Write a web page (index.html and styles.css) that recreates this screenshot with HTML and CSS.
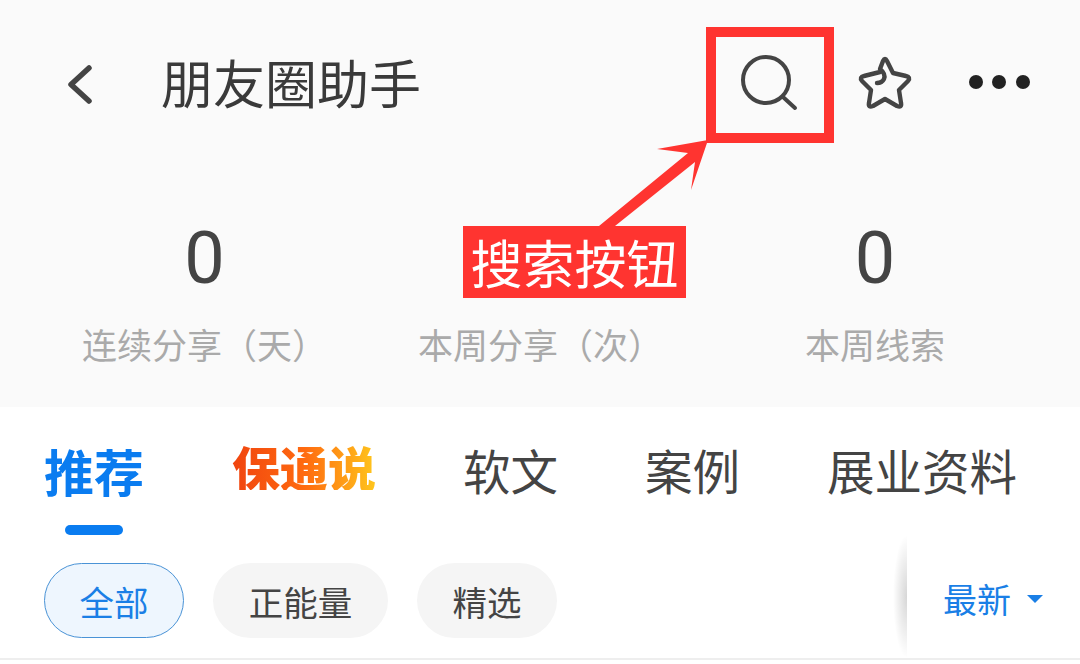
FILE: index.html
```html
<!DOCTYPE html>
<html lang="zh-CN">
<head>
  <meta charset="UTF-8">
  <title>朋友圈助手</title>
  <link rel="stylesheet" href="styles.css">
</head>
<body>

  <div class="page">
    <div class="top">
      <div class="header">
        <svg class="icon-back" viewBox="0 0 30 44" fill="none" stroke="#444" stroke-width="5.5" stroke-linecap="round" stroke-linejoin="round">
          <path d="M27 8 L9 24.5 L27 41"/>
        </svg>
        <h1>朋友圈助手</h1>
        <svg class="icon-search" viewBox="0 0 60 60" fill="none" stroke="#444" stroke-width="4" stroke-linecap="round">
          <circle cx="26" cy="28" r="23"/>
          <path d="M43 45 L55 56"/>
        </svg>
        <svg class="icon-star" viewBox="0 0 60 60" fill="none" stroke="#444" stroke-width="4.4" stroke-linecap="round" stroke-linejoin="round">
          <path d="M25 20 L9 24 Q4 25 7 29 L16 38 L14 51 Q13 56 18 54 L30 47 L42 54 Q47 56 46 51 L44 38 L53 29 Q56 25 51 24 L38 21 L32 9 Q30 5 28 9 L25 17 Q31 22 29 27 Q27 31 22 31"/>
        </svg>
        <svg class="icon-more" viewBox="0 0 64 20" fill="#222">
          <circle cx="8" cy="10" r="7"/>
          <circle cx="31" cy="10" r="7"/>
          <circle cx="55" cy="10" r="7"/>
        </svg>
      </div>

      <div class="stats">
        <div class="stat stat-days">
          <div class="num">0</div>
          <div class="label">连续分享（天）</div>
        </div>
        <div class="stat stat-times">
          <!-- number sits under the red label in the screenshot -->
          <div class="num"></div>
          <div class="label">本周分享（次）</div>
        </div>
        <div class="stat stat-leads">
          <div class="num">0</div>
          <div class="label">本周线索</div>
        </div>
      </div>
    </div>

    <div class="tabs">
      <div class="tab tab-active">推荐</div>
      <div class="tab tab-brand">保通说</div>
      <div class="tab tab-soft">软文</div>
      <div class="tab tab-case">案例</div>
      <div class="tab tab-docs">展业资料</div>
    </div>

    <div class="filters">
      <div class="pill pill-active">全部</div>
      <div class="pill pill-wide">正能量</div>
      <div class="pill">精选</div>
      <div class="sort">
        <span>最新</span>
        <i class="caret"></i>
      </div>
    </div>

    <!-- red annotation drawn over the screenshot -->
    <div class="mark-box"></div>
    <svg class="mark-arrow" viewBox="590 135 125 95" fill="#ff3430">
      <polygon points="708,140 657,149 688,153 599,226 615,226 695,162 691,190"/>
    </svg>
    <div class="mark-label">搜索按钮</div>
  </div>

</body>
</html>
```

FILE: styles.css
```css
* {
  box-sizing: border-box;
}

html,
body {
  margin: 0;
  padding: 0;
  background: #fff;
}

body {
  font-family: "Noto Sans CJK SC", "Noto Sans", sans-serif;
}

.page {
  position: relative;
  width: 1080px;
  height: 664px;
  overflow: hidden;
}

.top {
  height: 407px;
  background: #fafafa;
}

.header {
  display: flex;
  align-items: center;
  height: 164px;
  padding-left: 62px;
}

.icon-back {
  width: 30px;
  height: 44px;
  margin-right: 69px;
}

h1 {
  margin: 0;
  width: 579px;
  font-size: 52px;
  font-weight: 400;
  color: #3a3a3a;
  line-height: 1;
}

.icon-search,
.icon-star {
  width: 60px;
  height: 60px;
}

.icon-search {
  margin-right: 55px;
}

.icon-more {
  width: 64px;
  height: 20px;
  margin-left: 53px;
}

.stats {
  display: flex;
  padding: 52px 0 0 82px;
}

.stat {
  text-align: center;
}

.stat-days,
.stat-times {
  width: 245px;
}

.stat-times {
  margin-left: 91px;
}

.stat-leads {
  width: 140px;
  margin-left: 142px;
}

.num {
  min-height: 86px;
  font-family: Roboto, sans-serif;
  font-size: 72px;
  line-height: 86px;
  color: #444;
}

.label {
  margin-top: 20px;
  font-size: 35px;
  line-height: 44px;
  color: #aaa;
  white-space: nowrap;
}

.tabs {
  display: flex;
  align-items: center;
  height: 128px;
  padding: 0 0 2px 44px;
}

.tab {
  position: relative;
  font-size: 47.5px;
  line-height: 1;
  color: #444;
  white-space: nowrap;
}

.tab-active {
  font-size: 50px;
  font-weight: 700;
  color: #0a7cf0;
  margin-right: 88px;
}

.tab-active::after {
  content: "";
  position: absolute;
  left: 21px;
  top: 80px;
  width: 58px;
  height: 10px;
  border-radius: 5px;
  background: #0a7cf0;
}

.tab-brand {
  margin-top: -8px;
  font-size: 48px;
  font-weight: 900;
  margin-right: 87px;
  background: linear-gradient(90deg, #f0440f, #ff6a10 50%, #ffc61c);
  -webkit-background-clip: text;
  background-clip: text;
  color: transparent;
}

.tab-soft,
.tab-case {
  margin-right: 87px;
}

.filters {
  position: relative;
  display: flex;
  align-items: flex-start;
  gap: 29px;
  height: 125px;
  padding: 28px 0 0 44px;
  border-bottom: 2px solid #eee;
}

.pill {
  width: 140px;
  height: 75px;
  border-radius: 38px;
  background: #f5f5f5;
  color: #444;
  font-size: 34.5px;
  line-height: 77px;
  text-align: center;
}

.pill-wide {
  width: 175px;
}

.pill-active {
  background: #eef6fe;
  border: 1.5px solid #4a93d6;
  color: #1a7fe6;
  line-height: 74px;
}

.sort {
  position: absolute;
  top: 0;
  right: 0;
  bottom: 0;
  width: 173px;
  display: flex;
  align-items: center;
  padding: 3px 0 0 36px;
  background: #fff;
  color: #1a7fe6;
  font-size: 34px;
}

/* soft shadow on the left edge, fades out top and bottom */
.sort::before {
  content: "";
  position: absolute;
  left: -14px;
  top: 0;
  bottom: 0;
  width: 14px;
  background: radial-gradient(ellipse 100% 50% at right center, rgba(0, 0, 0, 0.16), transparent);
}

.caret {
  width: 0;
  height: 0;
  margin: 2px 0 0 16px;
  border-left: 8px solid transparent;
  border-right: 8px solid transparent;
  border-top: 8px solid #1a7fe6;
}

.mark-box {
  position: absolute;
  left: 706px;
  top: 27px;
  width: 128px;
  height: 116px;
  border: 10px solid #ff3430;
}

.mark-arrow {
  position: absolute;
  left: 590px;
  top: 135px;
  width: 125px;
  height: 95px;
}

.mark-label {
  position: absolute;
  left: 463px;
  top: 226px;
  width: 223px;
  height: 72px;
  background: #ff3430;
  color: #fff;
  font-size: 52px;
  line-height: 72px;
  text-align: center;
}
```
